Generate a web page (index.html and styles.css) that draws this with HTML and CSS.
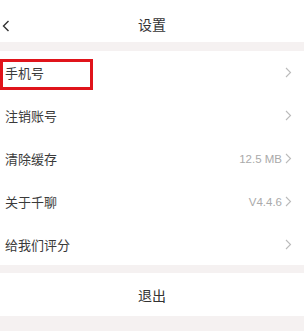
FILE: index.html
```html
<!DOCTYPE html>
<html lang="zh">
<head>
<meta charset="utf-8">
<link rel="stylesheet" href="styles.css">
</head>
<body>
<div class="page">
  <header class="nav">
    <svg class="back" width="8" height="12" viewBox="0 0 8 12"><path d="M6.5 1 L1.5 6 L6.5 11" fill="none" stroke="#333" stroke-width="1.4"/></svg>
    <div class="title">设置</div>
  </header>
  <div class="gap g1"></div>
  <ul class="list">
    <li class="row"><span class="label">手机号</span><span class="right"><svg class="chev" width="7" height="11" viewBox="0 0 7 11"><path d="M1 1 L5.5 5.5 L1 10" fill="none" stroke="#bbb" stroke-width="1.1"/></svg></span></li>
    <li class="row"><span class="label">注销账号</span><span class="right"><svg class="chev" width="7" height="11" viewBox="0 0 7 11"><path d="M1 1 L5.5 5.5 L1 10" fill="none" stroke="#bbb" stroke-width="1.1"/></svg></span></li>
    <li class="row"><span class="label">清除缓存</span><span class="right"><span class="val">12.5 MB</span><svg class="chev" width="7" height="11" viewBox="0 0 7 11"><path d="M1 1 L5.5 5.5 L1 10" fill="none" stroke="#bbb" stroke-width="1.1"/></svg></span></li>
    <li class="row"><span class="label">关于千聊</span><span class="right"><span class="val">V4.4.6</span><svg class="chev" width="7" height="11" viewBox="0 0 7 11"><path d="M1 1 L5.5 5.5 L1 10" fill="none" stroke="#bbb" stroke-width="1.1"/></svg></span></li>
    <li class="row"><span class="label">给我们评分</span><span class="right"><svg class="chev" width="7" height="11" viewBox="0 0 7 11"><path d="M1 1 L5.5 5.5 L1 10" fill="none" stroke="#bbb" stroke-width="1.1"/></svg></span></li>
  </ul>
  <div class="gap g2"></div>
  <div class="logout">退出</div>
  <div class="gap g3"></div>
  <div class="highlight"></div>
</div>
</body>
</html>
```

FILE: styles.css
```css
* { box-sizing: border-box; margin: 0; padding: 0; }
html, body { background: #fff; }
body {
  font-family: "Noto Sans CJK SC", "Liberation Sans", sans-serif;
  color: #333;
}
.page { position: relative; width: 304px; height: 332px; overflow: hidden; }
.nav {
  height: 42px;
  display: flex;
  align-items: center;
  justify-content: center;
  position: relative;
  padding-top: 6px;
}
.back { position: absolute; left: 2px; top: 20px; }
.title { font-size: 14px; color: #333; }
.gap { background: #f5f1f1; }
.g1 { height: 9px; }
.g2 { height: 8px; }
.g3 { height: 15px; }
.list { list-style: none; }
.row {
  height: 43px;
  display: flex;
  align-items: center;
  justify-content: space-between;
  padding: 0 12px 0 5px;
}
.row:last-child { height: 42px; }
.label { font-size: 13px; color: #3a3a3a; }
.right { display: flex; align-items: center; gap: 3px; }
.val { font-family: "Liberation Sans", sans-serif; font-size: 11.5px; color: #aaa; }
.chev { display: block; }
.logout {
  height: 43px;
  display: flex;
  align-items: center;
  justify-content: center;
  font-size: 14px;
  color: #333;
}
.highlight {
  position: absolute;
  left: 0;
  top: 59px;
  width: 93px;
  height: 31px;
  border: 3px solid #e0141b;
}
```
